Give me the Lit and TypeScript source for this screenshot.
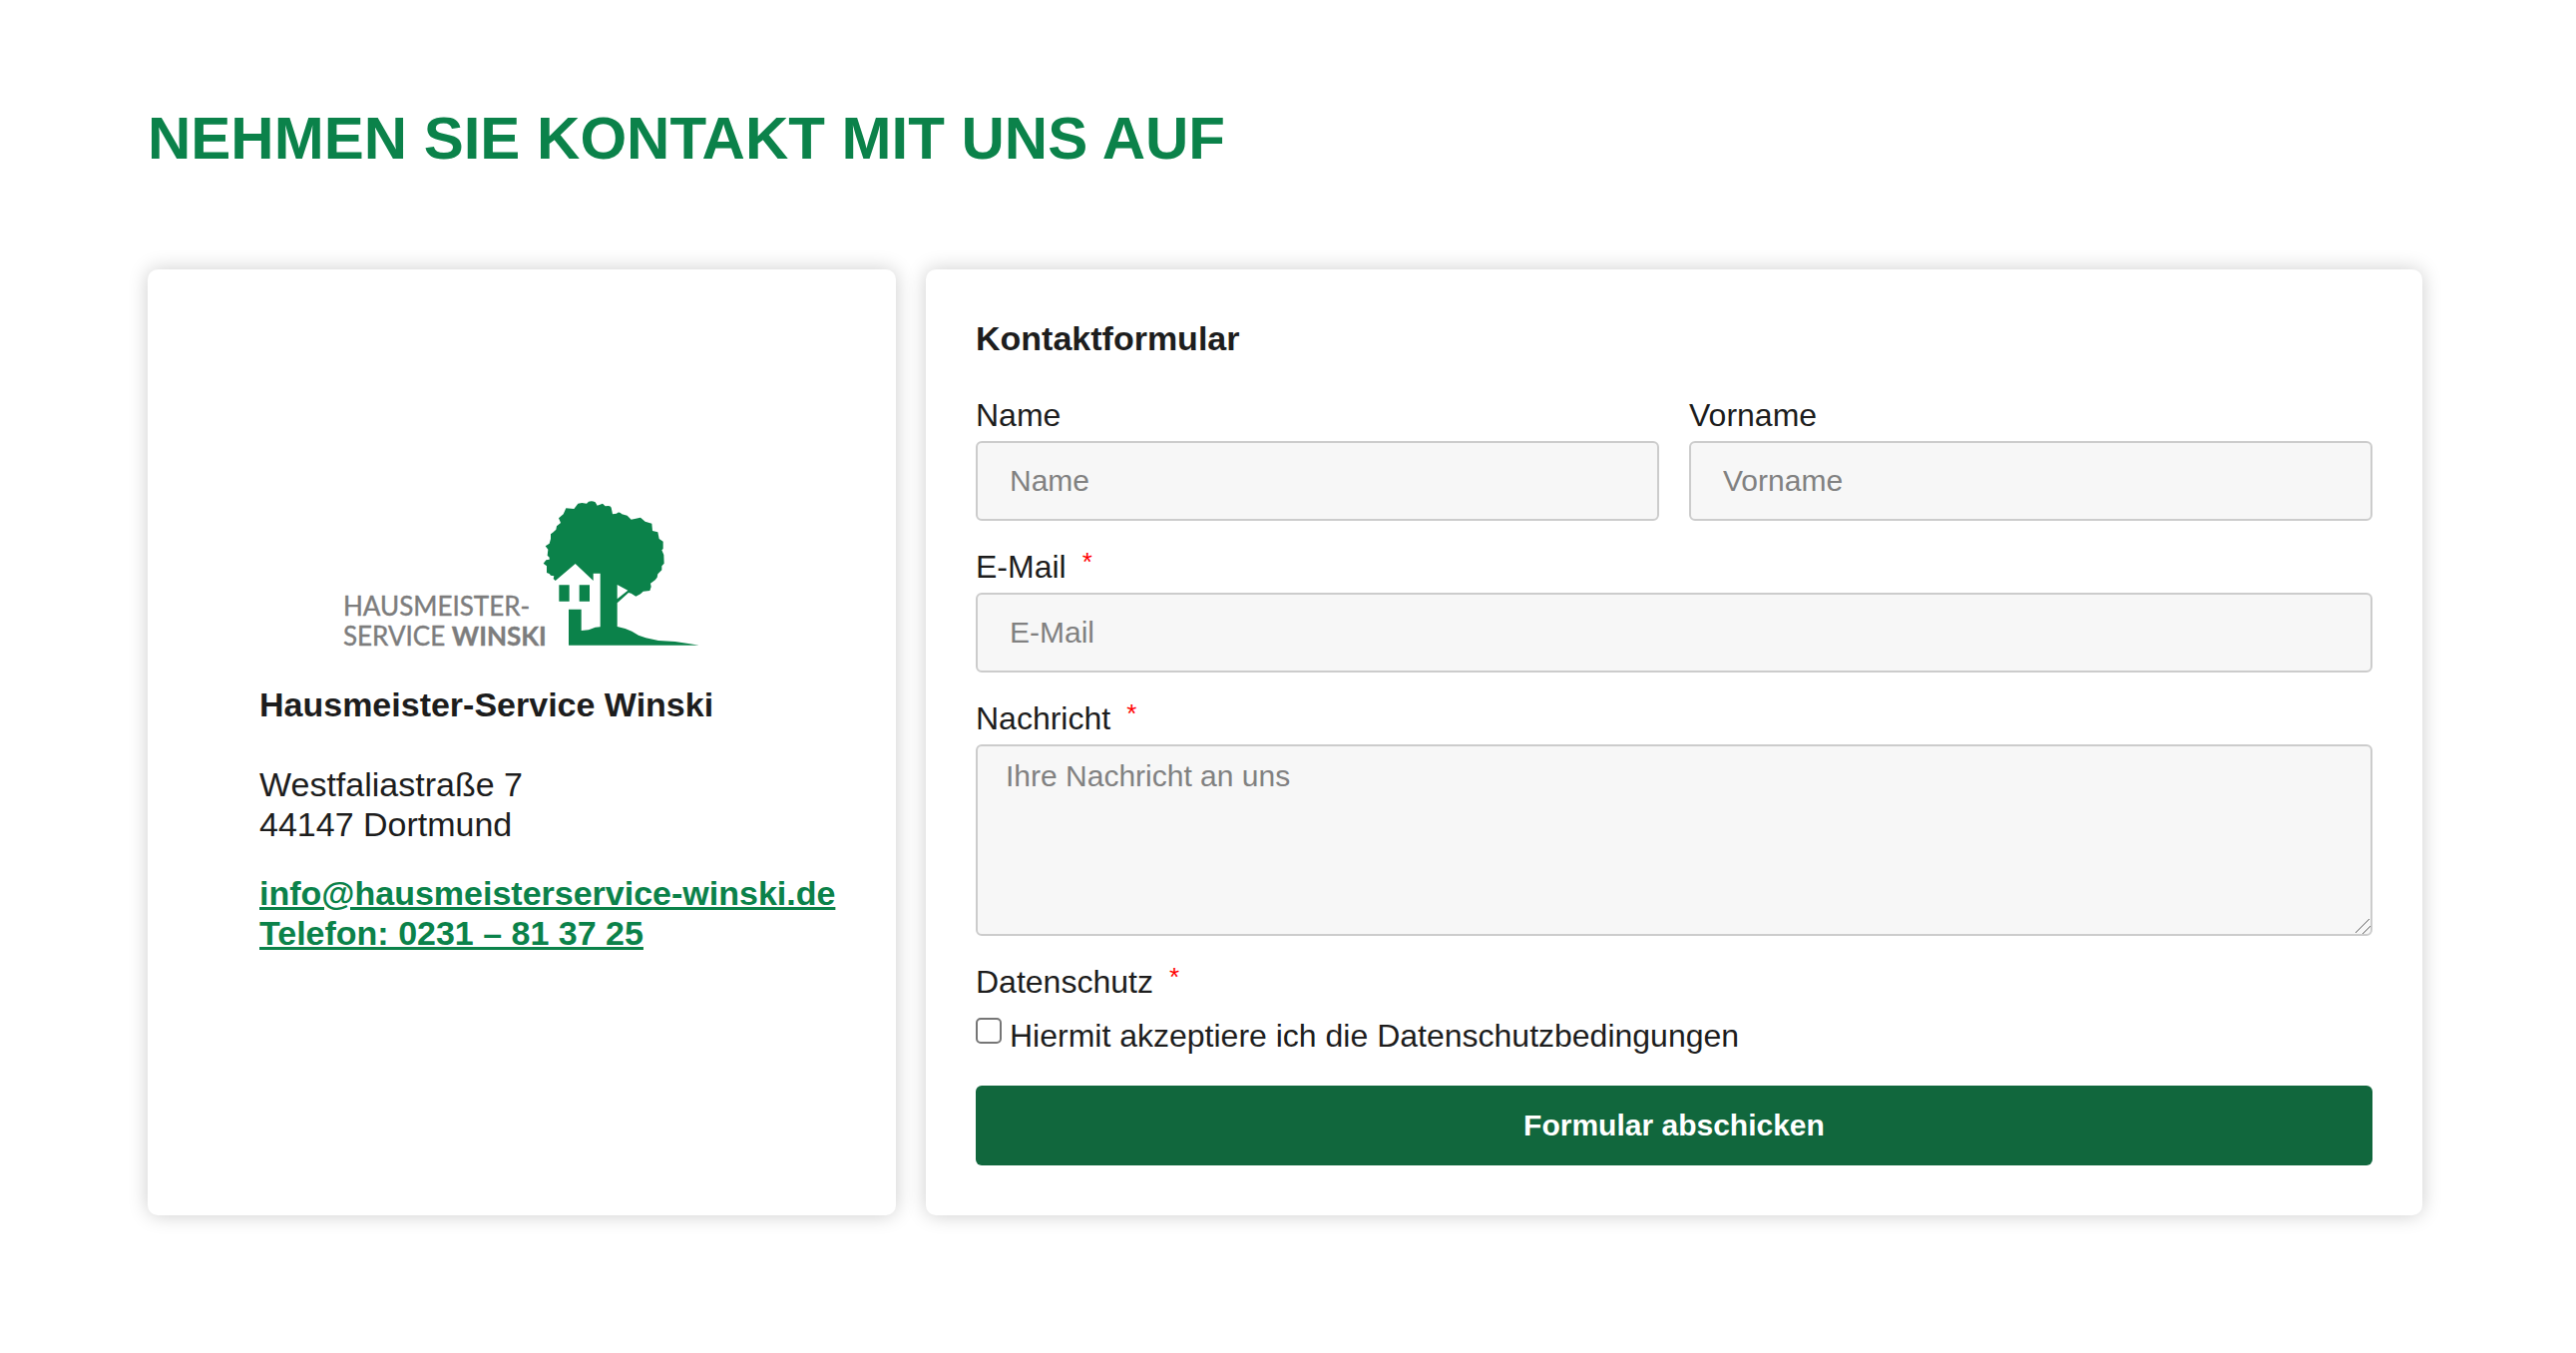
import { LitElement, html, css } from "lit";
import { customElement } from "lit/decorators.js";

@customElement("winski-logo")
class WinskiLogo extends LitElement {
  static styles = css`
    :host {
      display: block;
    }
    .logo {
      display: block;
      width: 364px;
      height: 154px;
    }
    .word {
      font-family: Lato, "Open Sans", sans-serif;
      font-size: 26px;
      fill: #7d7d7d;
      stroke: #7d7d7d;
      stroke-width: 0.4;
    }
    .strong {
      font-weight: 700;
    }
    .green {
      fill: #0b824a;
    }
  `;

  render() {
    return html`
      <svg class="logo" viewBox="-4 0 364 154" role="img" aria-label="Hausmeister-Service Winski">
        <text class="word" x="-2" y="115">HAUSMEISTER-</text>
        <text class="word" x="-2" y="145">SERVICE <tspan class="strong">WINSKI</tspan></text>
        <g class="green" transform="translate(184 -12) scale(0.33333)">
          <path
            fill-rule="evenodd"
            d="M80 276L74 270L76 262L66 260Q64 254 54 252L54 240L54 232L44 224L52 214L62 212L62 206L56 200L58 182L50 172L62 164L66 150L66 136L74 130L82 122L84 112L96 102L90 88L104 76L112 58L136 60L148 44L160 42L174 44L180 38Q190 34 200 40L206 50L222 44L230 52Q246 48 248 56L252 76L264 74Q272 66 280 76L296 80L308 92L336 86L350 98L370 104L372 126L388 130L392 150L404 158L404 180L400 184L406 198L407 224L400 232L400 244L388 256L386 266L380 274L366 284L368 294L364 306L344 308L336 316L322 323L308 314L300 312L266 343V414L290 420L310 428L330 440L352 448L390 456L440 459L480 465L512 470H120V362H158V426L180 424L200 416L215 415V254H194V276L140 225ZM266 288V331L298 305Z"
          />
          <path d="M91 289H122V338H91ZM152 289H183V338H152Z" />
        </g>
      </svg>
    `;
  }
}

@customElement("app-root")
class AppRoot extends LitElement {
  static styles = css`
    :host {
      display: block;
      font-family: "Liberation Sans", Arial, Helvetica, sans-serif;
      color: #1d1d1d;
      background: #fff;
    }
    * {
      box-sizing: border-box;
      margin: 0;
    }
    .page {
      padding: 104px 154px 138px 148px;
    }
    .title {
      font-size: 60px;
      line-height: 70px;
      font-weight: 700;
      color: #0b824a;
      text-transform: uppercase;
      margin-bottom: 96px;
    }
    .columns {
      display: grid;
      grid-template-columns: minmax(0, 1fr) minmax(0, 2fr);
      gap: 30px;
    }
    .card {
      background: #fff;
      border-radius: 10px;
      box-shadow: 0 0 20px rgba(0, 0, 0, 0.2);
      padding: 50px;
    }
    .contact {
      display: flex;
      flex-direction: column;
      justify-content: center;
      padding: 0 40px 32px 112px;
      font-size: 34px;
      line-height: 40px;
    }
    .brand {
      margin: 0 0 30px 82px;
    }
    .company,
    .subtitle {
      font-size: 34px;
      font-weight: 700;
    }
    .company {
      line-height: 40px;
      margin-bottom: 40px;
    }
    .address {
      font-style: normal;
      margin-bottom: 29px;
    }
    .link {
      color: #0b824a;
      font-weight: 700;
      white-space: nowrap;
      text-decoration: underline;
      text-decoration-thickness: 3px;
    }
    .subtitle {
      line-height: 38px;
      margin-bottom: 32px;
    }
    .form {
      display: grid;
      grid-template-columns: repeat(2, minmax(0, 1fr));
      gap: 20px 30px;
    }
    .field {
      display: flex;
      flex-direction: column;
      min-width: 0;
    }
    .wide {
      grid-column: 1 / -1;
    }
    .label {
      font-size: 32px;
      line-height: 52px;
    }
    .required::after {
      content: "*";
      color: #f00;
      font-size: 26px;
      line-height: 26px;
      vertical-align: text-top;
      margin-left: 16px;
    }
    .input,
    .area {
      font: inherit;
      font-size: 30px;
      line-height: 36px;
      color: #1d1d1d;
      width: 100%;
      background: #f7f7f7;
      border: 2px solid #ccc;
      border-radius: 6px;
      padding: 12px 32px;
      min-height: 80px;
    }
    .area {
      display: block;
      height: 192px;
      padding: 12px 28px;
      resize: vertical;
    }
    .area::-webkit-scrollbar {
      width: 16px;
      height: 16px;
    }
    .area::-webkit-resizer {
      background: linear-gradient(
          135deg,
          transparent 43%,
          #707070 45%,
          #707070 48%,
          transparent 50%,
          transparent 70%,
          #707070 72%,
          #707070 75%,
          transparent 77%
        )
        0 0 / 15px 15px no-repeat;
    }
    .input::placeholder,
    .area::placeholder {
      color: #818181;
      opacity: 1;
    }
    .consent {
      display: flex;
      align-items: flex-start;
      gap: 8px;
      min-height: 58px;
      font-size: 32px;
      line-height: 56px;
    }
    .box {
      appearance: none;
      width: 26px;
      height: 26px;
      margin-top: 10px;
      background: #fff;
      border: 2px solid #767676;
      border-radius: 5px;
    }
    .box:checked {
      background: #11673d;
    }
    .submit {
      font: inherit;
      font-size: 30px;
      font-weight: 700;
      min-height: 80px;
      color: #fff;
      background: #11673d;
      border: 0;
      border-radius: 6px;
      cursor: pointer;
    }
  `;

  render() {
    return html`
      <main class="page">
        <h1 class="title">Nehmen Sie Kontakt mit uns auf</h1>
        <div class="columns">
          <section class="card contact">
            <winski-logo class="brand"></winski-logo>
            <h2 class="company">Hausmeister-Service Winski</h2>
            <address class="address">Westfaliastraße 7<br />44147 Dortmund</address>
            <p>
              <a class="link" href="mailto:info@hausmeisterservice-winski.de">info@hausmeisterservice-winski.de</a><br />
              <a class="link" href="tel:+49231813725">Telefon: 0231 – 81 37 25</a>
            </p>
          </section>
          <section class="card">
            <h2 class="subtitle">Kontaktformular</h2>
            <form class="form" @submit=${(e: Event) => e.preventDefault()}>
              <div class="field">
                <label class="label" for="name">Name</label>
                <input class="input" id="name" type="text" placeholder="Name" />
              </div>
              <div class="field">
                <label class="label" for="vorname">Vorname</label>
                <input class="input" id="vorname" type="text" placeholder="Vorname" />
              </div>
              <div class="field wide">
                <label class="label required" for="email">E-Mail</label>
                <input class="input" id="email" type="email" placeholder="E-Mail" required />
              </div>
              <div class="field wide">
                <label class="label required" for="nachricht">Nachricht</label>
                <textarea class="area" id="nachricht" placeholder="Ihre Nachricht an uns" required></textarea>
              </div>
              <div class="field wide">
                <label class="label required" for="datenschutz">Datenschutz</label>
                <div class="consent">
                  <input class="box" id="datenschutz" type="checkbox" required />
                  <label for="datenschutz">Hiermit akzeptiere ich die Datenschutzbedingungen</label>
                </div>
              </div>
              <button class="submit wide" type="submit">Formular abschicken</button>
            </form>
          </section>
        </div>
      </main>
    `;
  }
}
